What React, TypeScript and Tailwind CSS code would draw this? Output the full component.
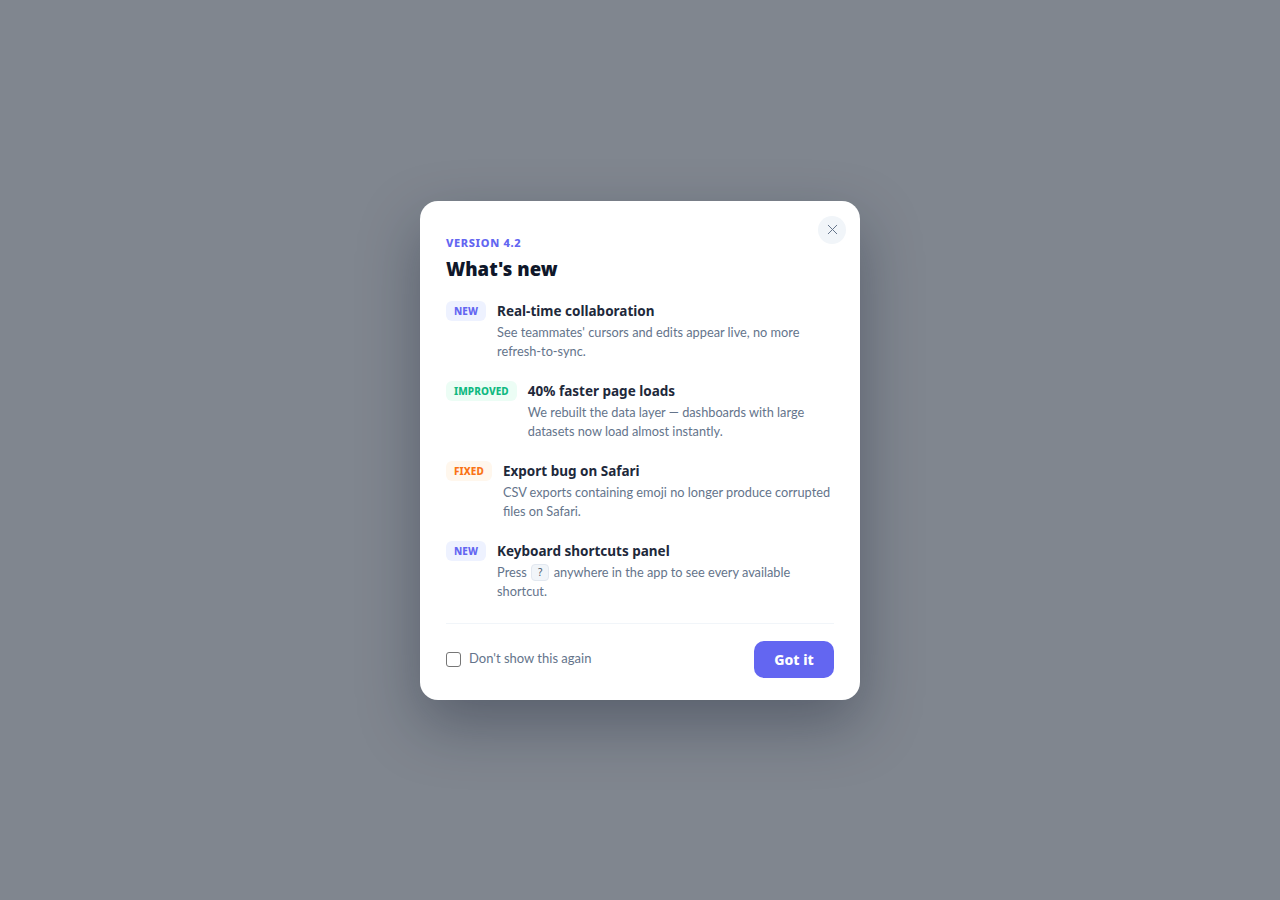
import { X } from "lucide-react";

type Item = {
  tag: "NEW" | "IMPROVED" | "FIXED";
  title: string;
  body: React.ReactNode;
};

const tagStyles: Record<Item["tag"], string> = {
  NEW: "bg-[#eef2ff] text-[#6366f1]",
  IMPROVED: "bg-[#ecfdf5] text-[#10b981]",
  FIXED: "bg-[#fff7ed] text-[#f97316]",
};

const items: Item[] = [
  {
    tag: "NEW",
    title: "Real-time collaboration",
    body: "See teammates' cursors and edits appear live, no more refresh-to-sync.",
  },
  {
    tag: "IMPROVED",
    title: "40% faster page loads",
    body: "We rebuilt the data layer — dashboards with large datasets now load almost instantly.",
  },
  {
    tag: "FIXED",
    title: "Export bug on Safari",
    body: "CSV exports containing emoji no longer produce corrupted files on Safari.",
  },
  {
    tag: "NEW",
    title: "Keyboard shortcuts panel",
    body: (
      <>
        Press{" "}
        <kbd className="mx-[1px] inline-block rounded-[4px] border border-[#e2e8f0] bg-[#f1f5f9] px-[6px] align-[1px] font-['Noto_Sans',sans-serif] text-[10px] leading-[15px] text-[#475569]">
          ?
        </kbd>{" "}
        anywhere in the app to see every available shortcut.
      </>
    ),
  },
];

export default function App() {
  return (
    <div className="flex min-h-screen items-center justify-center bg-[#80868f] font-['Noto_Sans',sans-serif]">
      <div className="relative w-[440px] rounded-[18px] bg-white px-[26px] pt-[34px] pb-[22px] shadow-[0_24px_60px_rgba(15,23,42,0.35)]">
        <button className="absolute top-[15px] right-[14px] flex h-[28px] w-[28px] items-center justify-center rounded-full bg-[#f1f5f9] text-[#64748b]">
          <X size={17} strokeWidth={1.4} />
        </button>

        <div className="text-[11px] font-extrabold tracking-[0.06em] text-[#6366f1] leading-[16px]">
          VERSION 4.2
        </div>
        <h2 className="mt-[6px] text-[18.5px] font-black leading-[24px] text-[#0f172a]">
          What's new
        </h2>

        <div className="mt-[20px] flex flex-col gap-[19px]">
          {items.map((it, i) => (
            <div key={i} className="flex items-start gap-[11px]">
              <span
                className={`shrink-0 rounded-[6px] px-[8px] text-[10px] font-extrabold leading-[20px] tracking-[0.01em] ${tagStyles[it.tag]}`}
              >
                {it.tag}
              </span>
              <div className="min-w-0">
                <div className="text-[13.5px] font-bold leading-[20px] text-[#1e293b]">
                  {it.title}
                </div>
                <p className="mt-[2px] font-['Lato',sans-serif] text-[12.75px] leading-[19.5px] text-[#64748b]">
                  {it.body}
                </p>
              </div>
            </div>
          ))}
        </div>

        <div className="mt-[21px] border-t border-[#f1f5f9] pt-[17px]">
          <div className="flex items-center justify-between">
            <label className="flex items-center gap-[8px] font-['Lato',sans-serif] text-[13px] text-[#64748b]">
              <span className="h-[15px] w-[15px] rounded-[3px] border border-[#767676] bg-white" />
              Don't show this again
            </label>
            <button className="h-[37px] w-[80px] rounded-[10px] bg-[#6366f1] text-[14px] font-extrabold text-white">
              Got it
            </button>
          </div>
        </div>
      </div>
    </div>
  );
}
